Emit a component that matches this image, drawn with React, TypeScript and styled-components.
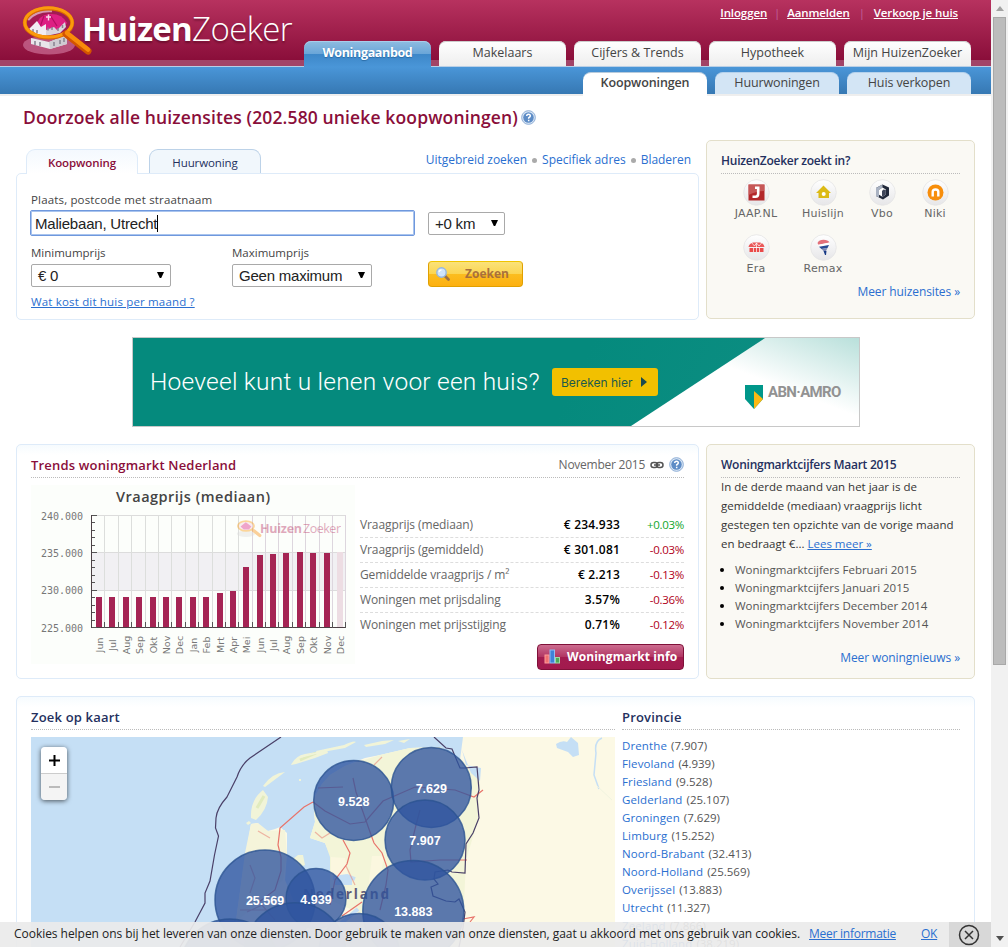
import React from "react";
import styled, { createGlobalStyle } from "styled-components";

const SANS = '"Open Sans", "Noto Sans", sans-serif';
const ARIAL = '"Liberation Sans", Arial, sans-serif';
const VERDANA = '"DejaVu Sans", Verdana, sans-serif';
const LINK = "#2a6fd0";
const WINE = "#8a0e3a";
const NAVY = "#24305e";

const GlobalStyle = createGlobalStyle`
  * { box-sizing: border-box; }
  body { margin: 0; background: #fff; font: 11.5px/18px ${SANS}; color: #444; overflow: hidden; }
  svg { display: block; }
`;

/* ---------- frame ---------- */
const Screen = styled.div`
  position: relative;
  display: flex;
  width: 1008px;
  height: 947px;
  overflow: hidden;
`;
const Page = styled.div`
  width: 991px;
  height: 947px;
  overflow: hidden;
`;
const Scrollbar = styled.div`
  display: flex;
  flex-direction: column;
  align-items: center;
  width: 17px;
  background: #f1f1f1;
`;
const ScrollArrow = styled.div<{ $down?: boolean }>`
  display: flex;
  align-items: center;
  justify-content: center;
  height: 17px;
  margin-top: ${(p) => (p.$down ? "auto" : "0")};
  color: ${(p) => (p.$down ? "#505050" : "#a3a3a3")};
`;
const ScrollThumb = styled.div`
  width: 13px;
  height: 648px;
  background: #bcbcbc;
  border: 1px solid #a8a8a8;
`;

/* ---------- header ---------- */
const Header = styled.header`
  display: flex;
  justify-content: space-between;
  height: 67px;
  padding-right: 20px;
  background: linear-gradient(#b7325f, #8a0e3a) 0 0 / 100% 60px no-repeat,
    linear-gradient(#b9cfe6, #b9cfe6) 0 66px / 100% 1px no-repeat, #a24467;
`;
const Brand = styled.div`
  display: flex;
  align-items: flex-start;
  padding-left: 20px;
`;
const BrandName = styled.div`
  margin: 6px 0 0 -12px;
  font: 700 33px/46px ${SANS};
  letter-spacing: -0.7px;
  color: #fff;
  text-shadow: 0 2px 2px rgba(60, 0, 20, 0.45);
`;
const BrandLight = styled.span`
  font-weight: 300;
  letter-spacing: -0.6px;
`;
const HeaderRight = styled.div`
  display: flex;
  flex-direction: column;
  justify-content: space-between;
  align-items: flex-end;
`;
const UserLinks = styled.div`
  display: flex;
  padding: 4px 13px 0 0;
  font-size: 11.5px;
  font-weight: 600;
  letter-spacing: -0.1px;
`;
const UserLink = styled.a`
  color: #fff;
  text-decoration: underline;
`;
const UserSep = styled.span<{ $w: number }>`
  width: ${(p) => p.$w}px;
  text-align: center;
  font-weight: 400;
  color: #c0619c;
`;
const Tabs = styled.nav`
  display: flex;
  gap: 8px;
`;
const MainTab = styled.a<{ $active?: boolean }>`
  width: 127px;
  height: ${(p) => (p.$active ? "26px" : "25px")};
  border-radius: 7px 7px 0 0;
  text-align: center;
  font-size: 12.5px;
  line-height: 24px;
  font-weight: ${(p) => (p.$active ? 700 : 400)};
  letter-spacing: ${(p) => (p.$active ? "-0.35px" : "0")};
  color: ${(p) => (p.$active ? "#fff" : "#444")};
  background: ${(p) =>
    p.$active
      ? "linear-gradient(#8fbce0 0, #69a5d8 50%, #3d87c8 51%, #4a96d8 100%)"
      : "linear-gradient(#fff, #eee)"};
  box-shadow: inset 0 1px 0 ${(p) => (p.$active ? "#a9cdea" : "#ccc")};
  text-shadow: ${(p) => (p.$active ? "0 1px 1px #2a6ba5" : "none")};
`;
const SubBar = styled.div`
  display: flex;
  justify-content: flex-end;
  height: 29px;
  padding: 5px 20px 0 0;
  background: linear-gradient(#4a96d8, #3678b3) 0 0 / 100% 27px no-repeat, #eee;
`;
const SubTab = styled.a<{ $active?: boolean }>`
  width: 124px;
  height: ${(p) => (p.$active ? "24px" : "22px")};
  border-radius: 8px 8px 0 0;
  border-top: 1px solid ${(p) => (p.$active ? "#b8cbdc" : "#b4d1ec")};
  text-align: center;
  font-size: 12.5px;
  line-height: 20px;
  font-weight: ${(p) => (p.$active ? 600 : 400)};
  letter-spacing: -0.12px;
  color: #444;
  background: ${(p) => (p.$active ? "#fff" : "#d3e5f5")};
`;

/* ---------- general building blocks ---------- */
const Main = styled.main`
  padding: 10px 16px 0;
`;
const PageTitle = styled.h1`
  display: flex;
  align-items: center;
  gap: 3px;
  height: 22px;
  margin: 0 0 12px;
  padding-left: 7px;
  font: 600 17.5px/22px ${SANS};
  letter-spacing: 0.13px;
  color: ${WINE};
`;
const Row = styled.section`
  display: flex;
  gap: 7px;
  margin-bottom: 17px;
`;
const Panel = styled.div<{ $h: number; $glow?: boolean }>`
  width: 683px;
  height: ${(p) => p.$h}px;
  padding: 0 14px;
  border: 1px solid #deebf9;
  border-radius: 5px;
  background: ${(p) => (p.$glow ? "linear-gradient(#f6fbfe, #fff 10px)" : "#fff")};
`;
const SideCard = styled.aside<{ $h: number }>`
  display: flex;
  flex-direction: column;
  width: 269px;
  height: ${(p) => p.$h}px;
  padding: 0 14px;
  border: 1px solid #e3dfca;
  border-radius: 5px;
  background: #faf9f4;
`;
const CardHead = styled.div<{ $wine?: boolean; $large?: boolean }>`
  display: flex;
  justify-content: space-between;
  align-items: center;
  height: 33px;
  padding-top: 7px;
  border-bottom: 1px dotted #bbb;
  font-size: ${(p) => (p.$large ? 13 : 12)}px;
  font-weight: 600;
  letter-spacing: ${(p) => (p.$large ? "0.18px" : "-0.25px")};
  color: ${(p) => (p.$wine ? WINE : NAVY)};
`;
const Link = styled.a<{ $u?: boolean }>`
  color: ${LINK};
  text-decoration: ${(p) => (p.$u ? "underline" : "none")};
`;
const MoreLink = styled.a<{ $mt: number }>`
  align-self: flex-end;
  margin-top: ${(p) => p.$mt}px;
  color: ${LINK};
  font-size: 12px;
  letter-spacing: -0.1px;
`;

/* ---------- search ---------- */
const SearchColumn = styled.div`
  width: 683px;
`;
const SearchTop = styled.div`
  display: flex;
  height: 33px;
  padding: 9px 8px 0 10px;
`;
const SearchTab = styled.a<{ $active?: boolean }>`
  width: 112px;
  height: ${(p) => (p.$active ? "25px" : "24px")};
  margin-right: 11px;
  border: 1px solid ${(p) => (p.$active ? "#deebf9" : "#bcd2e8")};
  border-bottom: 0;
  border-radius: 9px 9px 0 0;
  text-align: center;
  line-height: 26px;
  font-size: 11.5px;
  letter-spacing: -0.1px;
  font-weight: ${(p) => (p.$active ? 600 : 400)};
  color: ${(p) => (p.$active ? WINE : NAVY)};
  background: ${(p) => (p.$active ? "linear-gradient(#f4f9fe, #fff)" : "#f1f7fc")};
`;
const SearchLinks = styled.div`
  display: flex;
  gap: 5px;
  margin-left: auto;
  line-height: 22px;
  font-size: 12px;
  letter-spacing: -0.03px;
`;
const Dot = styled.span`
  width: 5px;
  height: 5px;
  margin-top: 9px;
  border-radius: 50%;
  background: #aaa;
`;
const FieldRow = styled.div<{ $first?: boolean }>`
  display: flex;
  align-items: flex-end;
  height: ${(p) => (p.$first ? 61 : 46)}px;
  margin-bottom: 6px;
`;
const Field = styled.label<{ $w: number }>`
  width: ${(p) => p.$w}px;
  letter-spacing: ${(p) => (p.$w > 300 ? 0.16 : 0)}px;
`;
const TextInput = styled.div`
  display: flex;
  align-items: center;
  width: 385px;
  height: 26px;
  margin: 1px 0 -1px -1px;
  padding-left: 4px;
  border: 1px solid #6f98dd;
  border-radius: 2px;
  box-shadow: inset 0 0 0 1px #a9c4ee;
  font: 15px ${ARIAL};
  letter-spacing: -0.2px;
  color: #222;
`;
const Caret = styled.span`
  width: 1px;
  height: 17px;
  background: #000;
`;
const Select = styled.div<{ $w: number }>`
  display: flex;
  align-items: center;
  justify-content: space-between;
  width: ${(p) => p.$w}px;
  height: 23px;
  margin-top: 2px;
  padding: 0 6px;
  border: 1px solid #a9a9a9;
  border-radius: 2px;
  background: #fff;
  font: 15px ${ARIAL};
  letter-spacing: -0.22px;
  color: #222;
`;
const SearchButton = styled.button`
  display: flex;
  align-items: center;
  gap: 14px;
  width: 95px;
  height: 26px;
  padding: 0 0 1px 6px;
  border: 1px solid #e0a000;
  border-top-color: #f0c400;
  border-radius: 4px;
  background: linear-gradient(#fae27a, #fbd552 49%, #fbbd1f 51%, #fdb010);
  font: 700 12px ${SANS};
  letter-spacing: 0;
  color: #a9703c;
`;
const CostLink = styled(Link)`
  letter-spacing: 0.17px;
`;

/* ---------- partner sites ---------- */
const Sites = styled.div`
  display: grid;
  grid-template-columns: 70px 64px 54px 52px;
  row-gap: 12px;
  padding-top: 5px;
`;
const Site = styled.div`
  display: flex;
  flex-direction: column;
  align-items: center;
  font: 11px/16px ${VERDANA};
  letter-spacing: 0.2px;
  color: #666;
`;

/* ---------- banner ---------- */
const Banner = styled.div`
  position: relative;
  display: flex;
  align-items: center;
  width: 728px;
  height: 90px;
  margin: 0 0 17px 116px;
  padding-left: 17px;
  border: 1px solid #c8c8c8;
  background: linear-gradient(115deg, #058a7d 60%, #0f8f84);
`;
const BannerCorner = styled.svg`
  position: absolute;
  right: 0;
  top: 0;
`;
const BannerText = styled.div`
  width: 402px;
  font: 300 24.5px/30px Roboto, ${SANS};
  letter-spacing: 0.22px;
  white-space: nowrap;
  color: #fff;
`;
const BannerButton = styled.div`
  display: flex;
  align-items: center;
  gap: 9px;
  width: 106px;
  height: 28px;
  padding-left: 9px;
  border-radius: 3px;
  background: #f2c000;
  font: 12px Inter, ${SANS};
  color: #1c5a4c;
`;
const Amro = styled.div`
  position: relative;
  display: flex;
  gap: 5px;
  margin: 30px 0 0 87px;
  font: 700 15px/15px "Roboto", ${ARIAL};
  letter-spacing: -0.65px;
  color: #929292;
`;

/* ---------- trends ---------- */
const TrendBody = styled.div`
  display: flex;
  gap: 5px;
  padding-top: 7px;
`;
const HeadMeta = styled.span`
  display: flex;
  align-items: center;
  gap: 5px;
  font-size: 12px;
  font-weight: 400;
  letter-spacing: -0.25px;
  color: #666;
`;
const TrendSide = styled.div`
  display: flex;
  flex-direction: column;
  width: 324px;
  padding-top: 28px;
`;
const TrendRow = styled.div<{ $last?: boolean }>`
  display: grid;
  grid-template-columns: 1fr 90px 64px;
  height: 25px;
  line-height: 24px;
  font-size: 12px;
  letter-spacing: -0.1px;
  color: #666;
  border-bottom: ${(p) => (p.$last ? "0" : "1px dashed #ddd")};
`;
const Value = styled.b`
  text-align: right;
  font-weight: 600;
  letter-spacing: 0.2px;
  color: #000;
`;
const Delta = styled.span<{ $up?: boolean }>`
  text-align: right;
  font-size: 11.5px;
  letter-spacing: -0.3px;
  color: ${(p) => (p.$up ? "#12a52c" : "#b00020")};
`;
const MarketButton = styled.button`
  display: flex;
  align-items: center;
  gap: 6px;
  align-self: flex-end;
  width: 147px;
  height: 26px;
  margin-top: 6px;
  padding: 0 0 1px 6px;
  border: 1px solid #7f1139;
  border-radius: 4px;
  background: linear-gradient(#cc6c8f, #b23764 48%, #a31c4f 52%, #a21a4e);
  font: 700 12px ${SANS};
  letter-spacing: 0.07px;
  white-space: nowrap;
  color: #fff;
`;

/* ---------- news ---------- */
const NewsText = styled.p`
  margin: -1px 0 0;
  line-height: 19px;
  white-space: nowrap;
  color: #333;
`;
const NewsList = styled.ul`
  margin: 8px 0 0;
  padding-left: 14px;
  color: #000;
`;
const NewsItem = styled.li`
  line-height: 18px;
  white-space: nowrap;
`;
const NewsLabel = styled.span`
  color: #555;
`;

/* ---------- map ---------- */
const MapPanel = styled(Panel)`
  display: flex;
  gap: 7px;
  width: 959px;
`;
const MapColumn = styled.div`
  width: 584px;
`;
const MapFrame = styled.div`
  position: relative;
  width: 584px;
  height: 230px;
  margin-top: 7px;
`;
const Zoomer = styled.div`
  position: absolute;
  left: 10px;
  top: 10px;
  width: 26px;
  border-radius: 4px;
  overflow: hidden;
  box-shadow: 0 1px 5px rgba(0, 0, 0, 0.65);
`;
const ZoomKey = styled.div<{ $off?: boolean }>`
  display: flex;
  align-items: center;
  justify-content: center;
  height: ${(p) => (p.$off ? 26 : 27)}px;
  border-bottom: ${(p) => (p.$off ? "0" : "1px solid #ccc")};
  background: ${(p) => (p.$off ? "#f4f4f4" : "#fff")};
  color: ${(p) => (p.$off ? "#bbb" : "#000")};
`;
const ProvinceColumn = styled.div`
  width: 338px;
`;
const ProvinceList = styled.div`
  padding-top: 7px;
`;
const Province = styled.div`
  height: 18px;
  line-height: 18px;
  color: #555;
`;
const ProvinceLink = styled.a`
  margin-right: 1px;
  letter-spacing: 0.12px;
  color: ${LINK};
`;

/* ---------- cookie bar ---------- */
const CookieBar = styled.div`
  position: absolute;
  left: 0;
  bottom: 0;
  display: flex;
  align-items: center;
  width: 991px;
  height: 25px;
  padding-left: 14px;
  background: rgba(235, 235, 235, 0.93);
  font-size: 12px;
  letter-spacing: -0.04px;
  white-space: nowrap;
  color: #222;
`;
const CookieText = styled.span`
  width: 795px;
  padding-bottom: 1px;
`;
const CookieLink = styled.a<{ $w: number }>`
  width: ${(p) => p.$w}px;
  padding-bottom: 1px;
  color: ${LINK};
  letter-spacing: -0.25px;
  text-decoration: underline;
`;
const CookieClose = styled.div`
  display: flex;
  align-items: center;
  justify-content: center;
  width: 42px;
  height: 25px;
  margin-left: auto;
  padding-right: 3px;
  background: #d8d8d8;
`;

/* ---------- drawings ---------- */
const HouseLens = ({ w, h }: { w: number; h: number }) => (
  <svg width={w} height={h} viewBox="20 0 74 58">
    <ellipse cx="49" cy="45" rx="26" ry="9.5" fill="#c86a92" opacity=".75" />
    <path d="M31 38 L49 42 L67 35 V44 L50 49 L31 44Z" fill="#e9e6ea" />
    <path d="M49 42 L67 35 V44 L50 49Z" fill="#cfcbd2" />
    <path d="M35 41v4M40 42v4M54 42v4M60 40v4M64 38v4" stroke="#8b8794" strokeWidth="1.6" />
    <ellipse cx="48.5" cy="23" rx="23.5" ry="14.5" fill="#a31b52" />
    <path d="M36 27 Q38 15 49 14 Q62 13 67 23 L60 30 L44 32Z" fill="#dd1f83" />
    <path d="M44 16 L40 27 M50 15 L57 26" stroke="#b30d63" strokeWidth="1.2" fill="none" />
    <path d="M29 29 L37 21 L41 27 L46 24 V36 L32 34Z" fill="#f1edf2" />
    <path d="M46 30 L54 27 L57 30 L65 22 L66 27 L60 33 L46 36Z" fill="#d9d4dc" />
    <path d="M33 29v3M37 30v3M48 27.500v3M52 27v3M58 28v3M62.500 25v3" stroke="#8f7f90" strokeWidth="1.500" />
    <path d="M48.500 14.500v6M46 17h5" stroke="#f6d9e8" strokeWidth="1.400" />
    <path d="M28 20 Q36 10 52 11" stroke="#fff" strokeWidth="2.500" opacity=".55" fill="none" />
    <ellipse cx="48.500" cy="23" rx="23.700" ry="14.600" fill="none" stroke="#d96a00" strokeWidth="4" />
    <ellipse cx="48.500" cy="22.400" rx="23.700" ry="14.600" fill="none" stroke="#fb9a0c" strokeWidth="3" />
    <path d="M66 34 L88 51" stroke="#d35400" strokeWidth="7" strokeLinecap="round" />
    <path d="M67 33 L88 49.500" stroke="#f88c0a" strokeWidth="4.500" strokeLinecap="round" />
  </svg>
);

const Help = ({ s }: { s: number }) => (
  <svg width={s} height={s} viewBox="0 0 16 16">
    <circle cx="8" cy="8" r="7.300" fill="#d9e6f4" stroke="#87a9d3" />
    <circle cx="8" cy="8" r="5.600" fill="#5d8cc6" />
    <path d="M6 6.400Q6.200 4.600 8 4.600T10 6.200Q10 7.300 8.200 8.300V9.300M8.200 10.500V12" stroke="#fff" strokeWidth="1.600" fill="none" />
  </svg>
);

const Chain = () => (
  <svg width="14" height="8" viewBox="0 0 14 8" fill="none" stroke="#555" strokeWidth="1.500">
    <rect x="1" y="1.500" width="6.500" height="5" rx="2.500" />
    <rect x="6.500" y="1.500" width="6.500" height="5" rx="2.500" />
    <path d="M4 4h6" />
  </svg>
);

const DropArrow = () => (
  <svg width="7" height="7" viewBox="0 0 7 7"><path d="M0 0H7L4.200 6H2.800Z" fill="#000" /></svg>
);

const Magnifier = () => (
  <svg width="16" height="16" viewBox="0 0 16 16">
    <path d="M9.500 9.500L13.500 13.500" stroke="#9a7046" strokeWidth="2.800" strokeLinecap="round" />
    <circle cx="6.500" cy="6.500" r="4.700" fill="#cfe4fb" stroke="#93b6e2" strokeWidth="1.400" />
    <path d="M4 6Q4.500 4 6.500 3.800" stroke="#fff" strokeWidth="1.200" fill="none" />
  </svg>
);

const BarsIcon = () => (
  <svg width="17" height="15" viewBox="0 0 17 15">
    <rect x="1" y="6" width="4" height="8" fill="#f07070" stroke="#ff9c9c" />
    <rect x="6" y="1" width="4.500" height="13" fill="#3f82d8" stroke="#8fbcf4" />
    <rect x="11.500" y="8.500" width="4" height="5.500" fill="#4da85a" stroke="#9edba5" />
  </svg>
);

const SITE_ART: Record<string, React.ReactNode> = {
  "JAAP.NL": (
    <>
      <rect x="5.500" y="5.500" width="16" height="16" fill="#b3282b" />
      <path d="M5.500 5.500H21.500V12Q14 12 5.500 16Z" fill="#cf6b6b" opacity=".7" />
      <path d="M12 8.700H15.200V14.500Q15.200 17.700 12.500 17.700H9.500" stroke="#fff" strokeWidth="2.600" fill="none" />
    </>
  ),
  Huislijn: (
    <>
      <path d="M6 14L13.500 6.500L21 14H19V19H8.500V14Z" fill="#dcba16" />
      <circle cx="13.700" cy="15" r="2" fill="#fff" />
    </>
  ),
  Vbo: (
    <>
      <path d="M13.500 5.500L20 8.500V16.500L14 20.500L7 17V9Z" fill="#222a3c" />
      <path d="M7 9L13.500 5.500V8.500L10 11V18.600L7 17Z" fill="#a9b2c2" />
      <path d="M10 11L13.500 8.500L16.800 10.500V15.500L13.500 17.700L10 15.800Z" fill="#fff" />
      <path d="M13 12L14.500 10.500L16.800 11V15.500L13.500 17.700L13 17Z" fill="#3f465a" />
    </>
  ),
  Niki: (
    <>
      <circle cx="13.500" cy="13.500" r="8" fill="#f78e0c" />
      <path d="M10.700 17.500V12.800Q10.700 10.500 13.500 10.500T16.300 12.800V17.500" stroke="#fff" strokeWidth="2.400" fill="none" />
    </>
  ),
  Era: (
    <>
      <path d="M5.500 13Q6 9.500 10 8.500H17Q21 9.500 21.500 13Z" fill="#ea5a5a" />
      <rect x="6.500" y="14" width="14" height="4" fill="#ea4a4a" />
      <path d="M8 8L11.500 12L13.500 9L16 12L19 8.500M10.500 14V18M13.500 9V18M16.500 14V18" stroke="#fff" strokeWidth=".7" fill="none" />
    </>
  ),
  Remax: (
    <>
      <path d="M7.500 9Q9 5.800 13.500 5.800T19.500 8.500L8.500 11Z" fill="#e2707a" />
      <path d="M8 10.800L19.500 8.500V11L9.500 13Z" fill="#fff" />
      <path d="M9 12.800L19 11L17.500 14L11.500 15Z" fill="#274a94" />
      <path d="M11.500 15L17.500 14L16 17H13.500Z" fill="#7c88b4" />
      <path d="M13.500 17H16.500L16 21H15Z" fill="#173a85" />
    </>
  ),
};

const SiteIcon = ({ name }: { name: string }) => (
  <svg width="27" height="27" viewBox="0 0 27 27">
    <defs>
      <linearGradient id="disc" x2="0" y2="1">
        <stop offset="0" stopColor="#fff" />
        <stop offset="1" stopColor="#e6e6e8" />
      </linearGradient>
    </defs>
    <circle cx="13.500" cy="13.500" r="12.800" fill="url(#disc)" stroke="#e4e4e4" strokeWidth=".8" />
    {SITE_ART[name]}
  </svg>
);

const MONTHS = ["Jun", "Jul", "Aug", "Sep", "Okt", "Nov", "Dec", "Jan", "Feb", "Mrt", "Apr", "Mei", "Jun", "Jul", "Aug", "Sep", "Okt", "Nov", "Dec"];
const TOPS = [597, 597, 597, 597, 597, 597, 597, 597, 597, 593, 591, 567, 555, 554, 553, 552, 553, 553, 552];
const STEP = 13.39;

const PriceChart = () => (
  <svg width="324" height="179" viewBox="31 485 324 179">
    <rect x="31" y="485" width="324" height="179" fill="#fcfefb" />
    <text x="193" y="502" textAnchor="middle" fontFamily={SANS} fontWeight="600" fontSize="14.500" fill="#444" textLength="154">
      Vraagprijs (mediaan)
    </text>
    <rect x="92" y="553" width="254" height="38" fill="#f1f0f3" />
    {[515.5, 552.5, 590.5].map((y) => (
      <path key={y} d={`M92 ${y}H346`} stroke="#dcdcdc" />
    ))}
    {MONTHS.map((_, i) => {
      const x = Math.round(91 + (i + 1) * STEP) + 0.5;
      return <path key={i} d={`M${x} 515V628`} stroke={x > 240 ? "#ddd6de" : "#dcdedc"} />;
    })}
    <g opacity=".4">
      <g transform="translate(229 518) scale(.35)">
        <ellipse cx="48.500" cy="45" rx="26" ry="9" fill="#ddd" />
        <ellipse cx="48.500" cy="23" rx="23" ry="14" fill="#f3d2e2" stroke="#fb9a0c" strokeWidth="5" />
        <path d="M33 24L48 12L64 24L57 33H42Z" fill="#dd1f83" />
        <path d="M68 34L88 50" stroke="#f88c0a" strokeWidth="9" strokeLinecap="round" />
      </g>
      <text x="260" y="533" fontFamily={SANS} fontSize="12.500" fontWeight="700" fill="#b52a5e" textLength="42">Huizen</text>
      <text x="303" y="533" fontFamily={SANS} fontSize="12.500" fill="#b52a5e" textLength="38">Zoeker</text>
    </g>
    {MONTHS.map((m, i) => {
      const x = Math.round(96 + i * STEP);
      const last = i === MONTHS.length - 1;
      return (
        <g key={i}>
          <rect x={x} y={TOPS[i]} width="6" height={628 - TOPS[i]} fill={last ? "#eddde3" : "#a52454"} />
          <text transform={`translate(${x + 6.5} 645) rotate(-90)`} textAnchor="middle" fontFamily={VERDANA} fontSize="9.500" fill="#777">
            {m}
          </text>
        </g>
      );
    })}
    <path d="M91.500 515V628M91 627.500H346" stroke="#4d4146" fill="none" />
    {Array.from({ length: 16 }, (_, i) => (
      <path key={i} d={`M92 ${Math.round(515 + i * 7.47) + 0.5}h${i % 5 === 0 ? 5 : 3}`} stroke="#555" />
    ))}
    {MONTHS.map((_, i) => (
      <path key={i} d={`M${Math.round(91 + (i + 1) * STEP) + 0.5} 622V628`} stroke="#555" />
    ))}
    {["240.000", "235.000", "230.000", "225.000"].map((t, i) => (
      <text key={t} x="41" y={519.5 + i * 37.4} fontFamily='"DejaVu Sans Mono", monospace' fontSize="10" fill="#777">
        {t}
      </text>
    ))}
  </svg>
);

const CLUSTERS: [number, number, number, string][] = [
  [353.7, 800.5, 40, "9.528"],
  [431.3, 787.5, 40, "7.629"],
  [425, 840, 40, "7.907"],
  [265, 900, 50, "25.569"],
  [316, 898.6, 30, "4.939"],
  [413.3, 911, 50.5, "13.883"],
  [359, 954, 40.5, ""],
  [295, 953.7, 51, ""],
  [230, 969, 50, ""],
];

const NetherlandsMap = () => (
  <svg width="584" height="230" viewBox="31 737 584 230">
    <rect x="31" y="737" width="584" height="230" fill="#c5dff5" />
    <path d="M463 737H615V967H225L236 920L243 870L247 848L251 824L258 823L260 828L268 831L275 829L280 827L287 833L287 853L285 880L293 900L302 905L331 895V857L325 843L310 838L315 822L313 800L322 784L330 775L345 766L365 758L380 755L410 748L440 747L460 760Z" fill="#fcf9e5" />
    <path d="M313 800L322 784L330 775L345 766L380 755L410 748L440 747L462 760L480 782L478 820L466 860L463 925L420 940L330 900V857L325 843L310 838L315 822Z" fill="#f3f5d8" />
    <path d="M245 853L251 824L258 823L268 831L285 830L287 853L283 880L236 922Z" fill="#f5f4da" />
    <path d="M331 857L345 858L348 875L338 890L331 893Z M372 856L384 856L380 880L368 890Z" fill="#fbf7df" />
    <path d="M251 818Q250 800 263 790L268 797Q267 810 256 820Z M263 786Q272 773 285 772L277 778L265 787Z M291 765Q295 756 305 754L327 750L328 753L315 758L296 764Z M293 859L298 855H303L305 865L300 867Z M246 823l3-2 2 2-3 2Z M299 779h2v2h-2Z" fill="#f1f4d8" />
    <path d="M300 760L316 753M257 808L264 796" stroke="#dbe8b4" strokeWidth="3" opacity=".7" />
    <path d="M300 758Q310 752 328 751M316 751L344 745Q354 740 356 742L345 748L317 753Z M364 745L382 741L394 740L385 744L366 747Z M398 741L410 739L404 743Z" fill="#f1f4d8" />
    <path d="M333 878l14 -2 8 3M335 880h15v3h-15M338 926l20-17" stroke="#c5dff5" strokeWidth="4" fill="none" />
    <path d="M462 750L466 765L481 768L480 781L471 773Z" fill="#c5dff5" />
    <path d="M556 744Q562 740 567 742L571 737L578 743L579 755L573 757L568 752L557 748Z" fill="#c5dff5" />
    <path d="M602 738Q594 741 596 753L594 775L599 789" stroke="#c5dff5" strokeWidth="1.500" fill="none" />
    <path d="M597 786L612 800" stroke="#f1f4e0" fill="none" />
    <g fill="none" stroke="#e8736a" strokeWidth="1.200">
      <path d="M313 802L304 807L280 828L278 845L281 857V871L275 890L255 905" />
      <path d="M313 802L325 811L350 824L365 822L383 801L415 787L455 790L474 797L483 790" />
      <path d="M318 788L343 787M353 778L356 792L370 832L374 843L382 853L388 870L386 885L380 910" />
      <path d="M343 840L350 853L347 864L335 880L330 905M420 810L416 825L410 850L411 862L440 860L467 860M342 916L362 902M463 919L474 917L470 922" />
      <path d="M250 865L255 878L250 893M247 912L262 905L275 920M240 910h30" opacity=".6" />
      <path d="M315 832L322 838L330 833M258 831L270 838M382 757L374 765M346 866L355 885" opacity=".5" />
    </g>
    <path d="M281 737L250 758Q241 765 237 777L227 797Q217 808 216 818L215.500 828L218.500 836L214.500 855L210 881L205 893V903L195 922L180 947" fill="none" stroke="#4a4068" strokeWidth="1.200" />
    <path d="M434 737L446 748L452 749L460 768H465L477 767L479 790L477 798L479 818L473 833L466 844L465 873L452 872L448 870L435 872L434 879L438 884L431 887L433 896L446 901L455 902L459 899L465 912L463 928L459 947" fill="none" stroke="#4a4068" strokeWidth="1.200" />
    <text x="303" y="899" fontFamily={SANS} fontWeight="700" fontSize="13.500" fill="#3c3460" opacity=".8" textLength="86">Nederland</text>
    {CLUSTERS.map(([x, y, r], i) => (
      <circle key={i} cx={x} cy={y} r={r} fill="#30559f" fillOpacity=".78" stroke="#2a5291" strokeOpacity=".8" strokeWidth="1.500" />
    ))}
    {CLUSTERS.map(([x, y, , t], i) => (
      <text key={i} x={x} y={y + 5} textAnchor="middle" fontFamily={ARIAL} fontWeight="700" fontSize="12.500" fill="#fff">
        {t}
      </text>
    ))}
  </svg>
);

/* ---------- data ---------- */
const TRENDS: [string, string, string][] = [
  ["Vraagprijs (mediaan)", "€ 234.933", "+0.03%"],
  ["Vraagprijs (gemiddeld)", "€ 301.081", "-0.03%"],
  ["Gemiddelde vraagprijs / m²", "€ 2.213", "-0.13%"],
  ["Woningen met prijsdaling", "3.57%", "-0.36%"],
  ["Woningen met prijsstijging", "0.71%", "-0.12%"],
];
const NEWS = ["Februari 2015", "Januari 2015", "December 2014", "November 2014"];
const PROVINCES = [
  ["Drenthe", "7.907"],
  ["Flevoland", "4.939"],
  ["Friesland", "9.528"],
  ["Gelderland", "25.107"],
  ["Groningen", "7.629"],
  ["Limburg", "15.252"],
  ["Noord-Brabant", "32.413"],
  ["Noord-Holland", "25.569"],
  ["Overijssel", "13.883"],
  ["Utrecht", "11.327"],
  ["Zeeland", "7.866"],
  ["Zuid-Holland", "38.219"],
];

export default function App() {
  return (
    <Screen>
      <GlobalStyle />
      <Page>
        <Header>
          <Brand>
            <HouseLens w={74} h={58} />
            <BrandName>Huizen<BrandLight>Zoeker</BrandLight></BrandName>
          </Brand>
          <HeaderRight>
            <UserLinks>
              <UserLink>Inloggen</UserLink>
              <UserSep $w={20}>|</UserSep>
              <UserLink>Aanmelden</UserLink>
              <UserSep $w={24}>|</UserSep>
              <UserLink>Verkoop je huis</UserLink>
            </UserLinks>
            <Tabs>
              <MainTab $active>Woningaanbod</MainTab>
              <MainTab>Makelaars</MainTab>
              <MainTab>Cijfers &amp; Trends</MainTab>
              <MainTab>Hypotheek</MainTab>
              <MainTab>Mijn HuizenZoeker</MainTab>
            </Tabs>
          </HeaderRight>
        </Header>
        <SubBar>
          <Tabs>
            <SubTab $active>Koopwoningen</SubTab>
            <SubTab>Huurwoningen</SubTab>
            <SubTab>Huis verkopen</SubTab>
          </Tabs>
        </SubBar>

        <Main>
          <PageTitle>
            Doorzoek alle huizensites (202.580 unieke koopwoningen)
            <Help s={15} />
          </PageTitle>

          <Row>
            <SearchColumn>
              <SearchTop>
                <SearchTab $active>Koopwoning</SearchTab>
                <SearchTab>Huurwoning</SearchTab>
                <SearchLinks>
                  <Link>Uitgebreid zoeken</Link>
                  <Dot />
                  <Link>Specifiek adres</Link>
                  <Dot />
                  <Link>Bladeren</Link>
                </SearchLinks>
              </SearchTop>
              <Panel $h={147}>
                <FieldRow $first>
                  <Field $w={397}>
                    Plaats, postcode met straatnaam
                    <TextInput>Maliebaan, Utrecht<Caret /></TextInput>
                  </Field>
                  <Select $w={77}>+0 km<DropArrow /></Select>
                </FieldRow>
                <FieldRow>
                  <Field $w={201}>
                    Minimumprijs
                    <Select $w={140}>€ 0<DropArrow /></Select>
                  </Field>
                  <Field $w={196}>
                    Maximumprijs
                    <Select $w={140}>Geen maximum<DropArrow /></Select>
                  </Field>
                  <SearchButton><Magnifier />Zoeken</SearchButton>
                </FieldRow>
                <CostLink $u>Wat kost dit huis per maand ?</CostLink>
              </Panel>
            </SearchColumn>
            <SideCard $h={179}>
              <CardHead>HuizenZoeker zoekt in?</CardHead>
              <Sites>
                {Object.keys(SITE_ART).map((n) => (
                  <Site key={n}><SiteIcon name={n} />{n}</Site>
                ))}
              </Sites>
              <MoreLink $mt={6}>Meer huizensites »</MoreLink>
            </SideCard>
          </Row>

          <Banner>
            <BannerCorner width="240" height="88" viewBox="0 0 240 88">
              <defs>
                <linearGradient id="mist" x1="0" y1="1" x2="1" y2="0">
                  <stop offset=".55" stopColor="#fff" />
                  <stop offset="1" stopColor="#b9e0db" />
                </linearGradient>
              </defs>
              <path d="M146 0H240V88H12Z" fill="url(#mist)" />
            </BannerCorner>
            <BannerText>Hoeveel kunt u lenen voor een huis?</BannerText>
            <BannerButton>
              Bereken hier
              <svg width="6" height="10" viewBox="0 0 6 10"><path d="M0 0L6 5L0 10Z" fill="#1c4a4c" /></svg>
            </BannerButton>
            <Amro>
              <svg width="18" height="24" viewBox="0 0 18 24">
                <path d="M0 0H18V14L9 24L0 14Z" fill="#00978a" />
                <path d="M9 6L18 14L9 24Z" fill="#fdb913" />
              </svg>
              ABN·AMRO
            </Amro>
          </Banner>

          <Row>
            <Panel $h={235} $glow>
              <CardHead $wine $large>
                Trends woningmarkt Nederland
                <HeadMeta>November 2015 <Chain /> <Help s={15} /></HeadMeta>
              </CardHead>
              <TrendBody>
                <PriceChart />
                <TrendSide>
                  {TRENDS.map(([label, value, delta], i) => (
                    <TrendRow key={label} $last={i === 4}>
                      {label}
                      <Value>{value}</Value>
                      <Delta $up={delta[0] === "+"}>{delta}</Delta>
                    </TrendRow>
                  ))}
                  <MarketButton><BarsIcon />Woningmarkt info</MarketButton>
                </TrendSide>
              </TrendBody>
            </Panel>
            <SideCard $h={235}>
              <CardHead>Woningmarktcijfers Maart 2015</CardHead>
              <NewsText>
                In de derde maand van het jaar is de<br />
                gemiddelde (mediaan) vraagprijs licht<br />
                gestegen ten opzichte van de vorige maand<br />
                en bedraagt €... <Link $u>Lees meer »</Link>
              </NewsText>
              <NewsList>
                {NEWS.map((n) => (
                  <NewsItem key={n}><NewsLabel>Woningmarktcijfers {n}</NewsLabel></NewsItem>
                ))}
              </NewsList>
              <MoreLink $mt={16}>Meer woningnieuws »</MoreLink>
            </SideCard>
          </Row>

          <MapPanel $h={300} $glow>
            <MapColumn>
              <CardHead $large>Zoek op kaart</CardHead>
              <MapFrame>
                <NetherlandsMap />
                <Zoomer>
                  <ZoomKey>
                    <svg width="11" height="11"><path d="M5.500 0V11M0 5.500H11" stroke="currentColor" strokeWidth="2" /></svg>
                  </ZoomKey>
                  <ZoomKey $off>
                    <svg width="11" height="3"><path d="M0 1H11" stroke="currentColor" strokeWidth="2" /></svg>
                  </ZoomKey>
                </Zoomer>
              </MapFrame>
            </MapColumn>
            <ProvinceColumn>
              <CardHead $large>Provincie</CardHead>
              <ProvinceList>
                {PROVINCES.map(([name, count]) => (
                  <Province key={name}><ProvinceLink>{name}</ProvinceLink> ({count})</Province>
                ))}
              </ProvinceList>
            </ProvinceColumn>
          </MapPanel>
        </Main>
      </Page>

      <Scrollbar>
        <ScrollArrow>
          <svg width="8" height="5"><path d="M0 5L4 0L8 5Z" fill="currentColor" /></svg>
        </ScrollArrow>
        <ScrollThumb />
        <ScrollArrow $down>
          <svg width="8" height="5"><path d="M0 0L4 5L8 0Z" fill="currentColor" /></svg>
        </ScrollArrow>
      </Scrollbar>

      <CookieBar>
        <CookieText>
          Cookies helpen ons bij het leveren van onze diensten. Door gebruik te maken van onze diensten, gaat u akkoord met ons gebruik van cookies.
        </CookieText>
        <CookieLink $w={112}>Meer informatie</CookieLink>
        <CookieLink $w={20}>OK</CookieLink>
        <CookieClose>
          <svg width="22" height="22" viewBox="0 0 22 22" fill="none" stroke="#333" strokeWidth="1.500">
            <circle cx="11" cy="11" r="9.500" />
            <path d="M7 7L15 15M15 7L7 15" />
          </svg>
        </CookieClose>
      </CookieBar>
    </Screen>
  );
}
